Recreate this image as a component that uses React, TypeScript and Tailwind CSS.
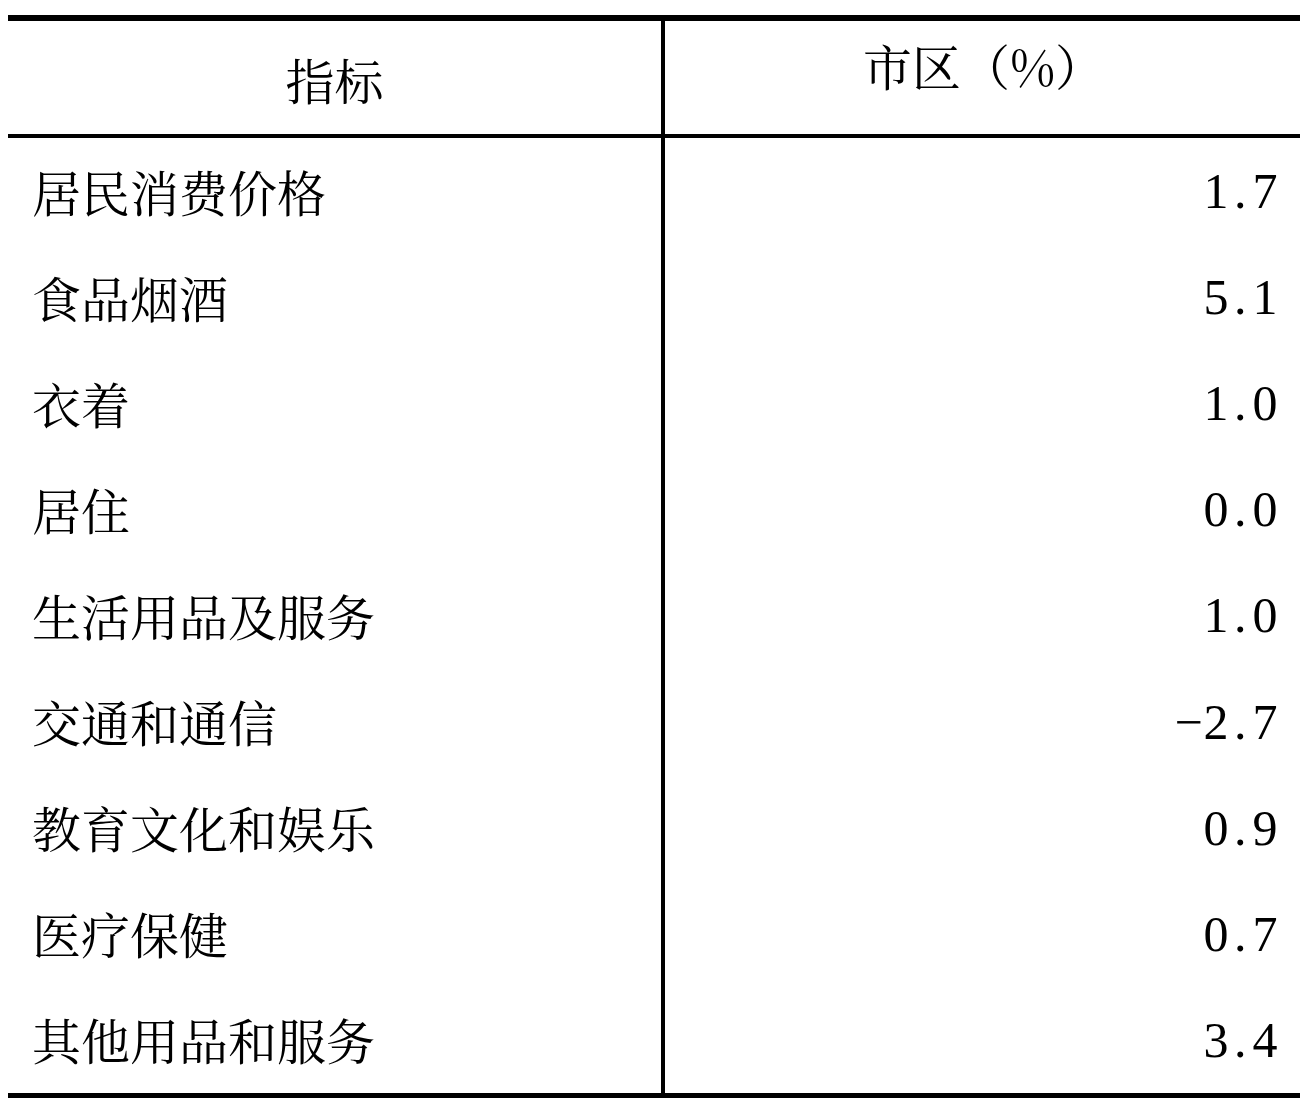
import React from "react";

const rows: [string, string][] = [
  ["居民消费价格", "1.7"],
  ["食品烟酒", "5.1"],
  ["衣着", "1.0"],
  ["居住", "0.0"],
  ["生活用品及服务", "1.0"],
  ["交通和通信", "−2.7"],
  ["教育文化和娱乐", "0.9"],
  ["医疗保健", "0.7"],
  ["其他用品和服务", "3.4"],
];

const cjk = { fontFamily: '"Noto Serif CJK SC", "Noto Sans CJK SC", serif' };
const num = { fontFamily: '"Liberation Serif", "Noto Serif CJK SC", serif' };

function Num({ v }: { v: string }) {
  return (
    <span className="inline-flex" style={num}>
      {v.split("").map((c, i) =>
        c === "−" ? (
          <span key={i} className="inline-block w-[29px] text-left">
            {c}
          </span>
        ) : (
          <span key={i} className="inline-block w-[24.5px] text-center">
            {c}
          </span>
        )
      )}
    </span>
  );
}

export default function App() {
  return (
    <div className="w-[1303px] h-[1099px] bg-white text-black overflow-hidden">
      <div className="ml-[8px] mt-[15px] w-[1292px] border-t-[6px] border-b-[5px] border-black text-[49px] leading-none">
        <div className="flex h-[117px] border-b-4 border-black">
          <div className="w-[657px] border-r-4 border-black flex items-center justify-center pt-[4px]" style={cjk}>
            指标
          </div>
          <div className="flex-1 flex justify-center pt-[20px] pl-[2px]" style={cjk}>
            市区（%）
          </div>
        </div>
        {rows.map(([k, v]) => (
          <div key={k} className="flex h-[106.1px]">
            <div className="w-[657px] border-r-4 border-black flex items-center pl-[24px]" style={cjk}>
              {k}
            </div>
            <div className="flex-1 flex items-center justify-end pr-[23px] text-[50px]">
              <Num v={v} />
            </div>
          </div>
        ))}
      </div>
    </div>
  );
}
